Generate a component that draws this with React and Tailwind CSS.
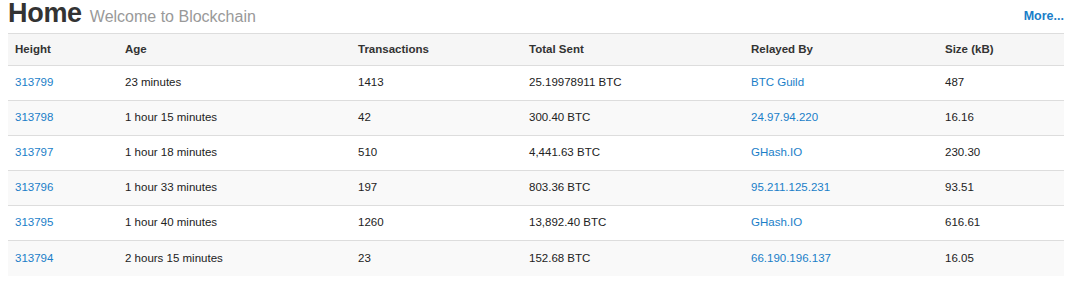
const rows = [
  ["313799", "23 minutes", "1413", "25.19978911 BTC", "BTC Guild", "487"],
  ["313798", "1 hour 15 minutes", "42", "300.40 BTC", "24.97.94.220", "16.16"],
  ["313797", "1 hour 18 minutes", "510", "4,441.63 BTC", "GHash.IO", "230.30"],
  ["313796", "1 hour 33 minutes", "197", "803.36 BTC", "95.211.125.231", "93.51"],
  ["313795", "1 hour 40 minutes", "1260", "13,892.40 BTC", "GHash.IO", "616.61"],
  ["313794", "2 hours 15 minutes", "23", "152.68 BTC", "66.190.196.137", "16.05"],
];

const headers = ["Height", "Age", "Transactions", "Total Sent", "Relayed By", "Size (kB)"];
const widths = ["w-[110px]", "w-[233px]", "w-[171px]", "w-[222px]", "w-[194px]", "w-[126px]"];

export default function App() {
  return (
    <div className="w-[1074px] h-[290px] bg-white font-['Liberation_Sans',Arial,sans-serif] text-[#333]">
      {/* ── Title bar ───────────────────────────────────── */}
      <div className="flex items-end justify-between pl-[8px] pr-[10px] h-[33px] pb-[6px]">
        <div className="flex items-baseline gap-[8px]">
          <span className="text-[27px] font-bold leading-none tracking-[-0.3px] text-[#333]">Home</span>
          <span className="text-[16px] leading-none text-[#999]">Welcome to Blockchain</span>
        </div>
        <a className="self-start mt-[7px] text-[12.5px] font-bold text-[#1a7ec8]">More...</a>
      </div>

      {/* ── Blocks table ────────────────────────────────── */}
      <table className="ml-[8px] w-[1056px] border-collapse text-[11.5px] table-fixed">
        <thead>
          <tr className="bg-[#f6f6f6] border-t border-b border-[#dddddd] h-[32px]">
            {headers.map((h, i) => (
              <th key={h} className={`${widths[i]} text-left font-bold pl-[7px] text-[#333]`}>
                {h}
              </th>
            ))}
          </tr>
        </thead>
        <tbody>
          {rows.map((r, idx) => (
            <tr
              key={r[0]}
              className={`h-[35px] border-b border-[#dddddd] ${idx % 2 === 1 ? "bg-[#f9f9f9]" : "bg-white"} ${idx === rows.length - 1 ? "border-b-0" : ""}`}
            >
              {r.map((c, i) => (
                <td
                  key={i}
                  className={`pl-[7px] ${i === 0 || i === 4 ? "text-[#1a7ec8]" : "text-[#222]"}`}
                >
                  {c}
                </td>
              ))}
            </tr>
          ))}
        </tbody>
      </table>
    </div>
  );
}
